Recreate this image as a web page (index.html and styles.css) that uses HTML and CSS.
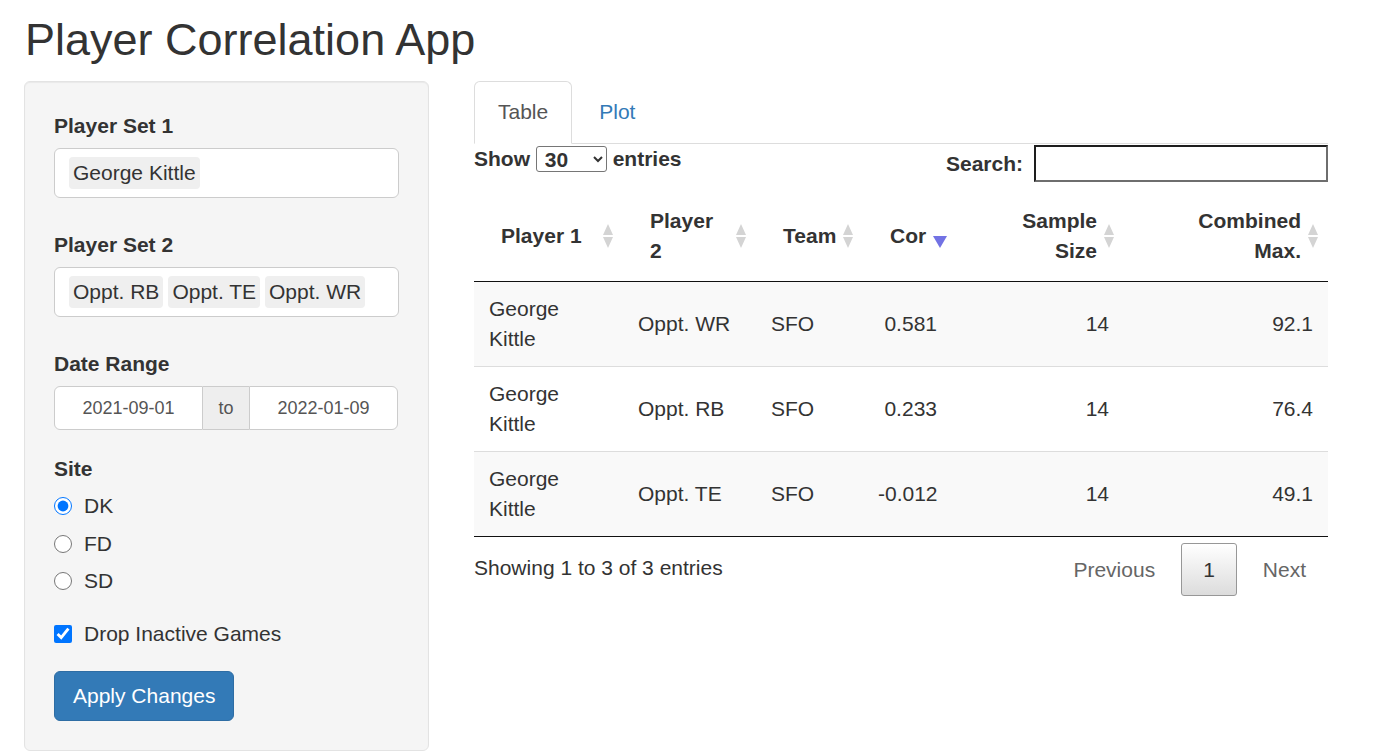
FILE: index.html
```html
<!DOCTYPE html>
<html lang="en">
<head>
<meta charset="utf-8">
<title>Player Correlation App</title>
<link rel="stylesheet" href="styles.css">
</head>
<body>
<div class="page">
  <h2 class="title">Player Correlation App</h2>
  <div class="layout">
    <aside class="well">
      <div class="group g-select">
        <label class="lbl">Player Set 1</label>
        <div class="selectize"><span class="item">George Kittle</span></div>
      </div>
      <div class="group g-select">
        <label class="lbl">Player Set 2</label>
        <div class="selectize"><span class="item">Oppt. RB</span><span class="item">Oppt. TE</span><span class="item">Oppt. WR</span></div>
      </div>
      <div class="group g-date">
        <label class="lbl">Date Range</label>
        <div class="daterange">
          <input class="date-in first" type="text" value="2021-09-01" readonly>
          <span class="addon">to</span>
          <input class="date-in last" type="text" value="2022-01-09" readonly>
        </div>
      </div>
      <div class="group">
        <label class="lbl">Site</label>
        <div class="radios">
          <label class="opt"><input type="radio" name="site" checked>DK</label>
          <label class="opt"><input type="radio" name="site">FD</label>
          <label class="opt"><input type="radio" name="site">SD</label>
        </div>
      </div>
      <label class="opt check"><input type="checkbox" checked>Drop Inactive Games</label>
      <button class="btn" type="button">Apply Changes</button>
    </aside>
    <main class="main">
      <ul class="tabs">
        <li class="tab active">Table</li>
        <li class="tab">Plot</li>
      </ul>
      <div class="dt">
        <div class="dt-top">
          <div class="length">Show <select><option>30</option></select> entries</div>
          <div class="filter"><span>Search:</span><input class="search" type="search"></div>
        </div>
        <table class="grid">
          <colgroup>
            <col class="c1"><col class="c2"><col class="c3"><col class="c4"><col class="c5"><col class="c6">
          </colgroup>
          <thead>
            <tr>
              <th class="sorting">Player 1</th>
              <th class="sorting">Player<br>2</th>
              <th class="sorting">Team</th>
              <th class="num sorting-desc">Cor</th>
              <th class="num sorting">Sample<br>Size</th>
              <th class="num sorting">Combined<br>Max.</th>
            </tr>
          </thead>
          <tbody>
            <tr class="odd">
              <td>George<br>Kittle</td><td>Oppt. WR</td><td>SFO</td><td class="num">0.581</td><td class="num">14</td><td class="num">92.1</td>
            </tr>
            <tr>
              <td>George<br>Kittle</td><td>Oppt. RB</td><td>SFO</td><td class="num">0.233</td><td class="num">14</td><td class="num">76.4</td>
            </tr>
            <tr class="odd">
              <td>George<br>Kittle</td><td>Oppt. TE</td><td>SFO</td><td class="num">-0.012</td><td class="num">14</td><td class="num">49.1</td>
            </tr>
          </tbody>
        </table>
        <div class="dt-bottom">
          <div class="info">Showing 1 to 3 of 3 entries</div>
          <div class="paginate">
            <span class="pbtn">Previous</span>
            <span class="pbtn current">1</span>
            <span class="pbtn">Next</span>
          </div>
        </div>
      </div>
    </main>
  </div>
</div>
</body>
</html>
```
FILE: styles.css
```css
* { box-sizing: border-box; }

body {
  margin: 0;
  font-family: "Liberation Sans", Arial, sans-serif;
  font-size: 21px;
  line-height: 30px;
  color: #333;
  background: #fff;
}

.page { padding-left: 24px; }

.title {
  font-size: 45px;
  font-weight: normal;
  line-height: 50px;
  margin: 15px 0 16px 1px;
  color: #333;
}

.layout {
  display: flex;
  align-items: flex-start;
  gap: 45px;
}

/* ---------- sidebar ---------- */
.well {
  flex: none;
  width: 405px;
  background: #f5f5f5;
  border: 1px solid #e3e3e3;
  border-radius: 6px;
  padding: 29px;
  box-shadow: inset 0 1px 1px rgba(0, 0, 0, .05);
}

.lbl {
  display: block;
  font-weight: bold;
  margin-bottom: 7px;
}

.g-select { margin-bottom: 32px; }
.g-date { margin-bottom: 24px; }

.selectize {
  height: 50px;
  border: 1px solid #ccc;
  border-radius: 6px;
  background: #fff;
  padding: 8px 14px;
  display: flex;
  gap: 5px;
}

.item {
  background: #efefef;
  border-radius: 4px;
  padding: 1px 4px;
  line-height: 30px;
  color: #333;
}

.daterange {
  display: flex;
  height: 44px;
}

.date-in {
  width: 149px;
  height: 44px;
  border: 1px solid #ccc;
  background: #fff;
  font-family: "Liberation Sans", Arial, sans-serif;
  font-size: 18px;
  color: #555;
  text-align: center;
  padding: 0;
  margin: 0;
}

.date-in.first { border-radius: 6px 0 0 6px; }
.date-in.last { border-radius: 0 6px 6px 0; }

.addon {
  width: 46px;
  background: #eee;
  border-top: 1px solid #ccc;
  border-bottom: 1px solid #ccc;
  font-size: 18px;
  color: #555;
  display: flex;
  align-items: center;
  justify-content: center;
}

.radios {
  display: flex;
  flex-direction: column;
  gap: 7.5px;
}

.opt {
  display: flex;
  align-items: center;
  height: 30px;
  font-weight: normal;
}

.opt input {
  width: 18px;
  height: 18px;
  margin: 0 12px 0 0;
}

.check { margin-top: 23px; }

.btn {
  display: block;
  margin-top: 22px;
  font-family: "Liberation Sans", Arial, sans-serif;
  font-size: 21px;
  line-height: 30px;
  padding: 9px 18px;
  color: #fff;
  background: #337ab7;
  border: 1px solid #2e6da4;
  border-radius: 6px;
}

/* ---------- main ---------- */
.main {
  flex: none;
  width: 854px;
}

.tabs {
  display: flex;
  list-style: none;
  margin: 0;
  padding: 0;
  border-bottom: 1px solid #ddd;
}

.tab {
  padding: 15px 23px 16px;
  border: 1px solid transparent;
  border-radius: 6px 6px 0 0;
  margin-bottom: -1px;
  margin-right: 3px;
  color: #337ab7;
  line-height: 30px;
}

.tab.active {
  border-color: #ddd #ddd transparent;
  background: #fff;
  color: #555;
}

.dt-top {
  display: flex;
  justify-content: space-between;
  align-items: flex-start;
}

.length {
  font-weight: bold;
  line-height: 30px;
}

.length select {
  width: 71px;
  height: 26px;
  font-family: "Liberation Sans", Arial, sans-serif;
  font-size: 21px;
  font-weight: bold;
  color: #333;
  border: 1px solid #767676;
  border-radius: 3px;
  background: #fff;
  padding: 0 0 0 4px;
  vertical-align: middle;
  margin: -3px 0 0;
}

.filter {
  display: flex;
  align-items: center;
  margin-top: 1px;
  font-weight: bold;
}

.search {
  width: 294px;
  height: 37px;
  margin: 0 0 0 11px;
  border-style: solid;
  border-width: 2px;
  border-color: #1e1e1e #6e6e6e #6e6e6e #1e1e1e;
  background: #fff;
  padding: 0 4px;
  font-size: 21px;
}

.grid {
  width: 854px;
  table-layout: fixed;
  border-collapse: separate;
  border-spacing: 0;
  margin-top: 9px;
  border-bottom: 1px solid #111;
}

.c1 { width: 149px; }
.c2 { width: 133px; }
.c3 { width: 107px; }
.c4 { width: 89px; }
.c5 { width: 172px; }
.c6 { width: 204px; }

.grid th {
  position: relative;
  padding: 15px 27px;
  font-weight: bold;
  text-align: left;
  vertical-align: middle;
  border-bottom: 1px solid #111;
}

.grid th.num,
.grid td.num { text-align: right; }

.grid td {
  padding: 12px 15px;
  vertical-align: middle;
  color: #333;
}

.grid tbody tr + tr td { border-top: 1px solid #ddd; }
.grid tr.odd td { background: #f9f9f9; }

/* sort icons */
.sorting::before,
.sorting::after {
  content: "";
  position: absolute;
  right: 10px;
  width: 0;
  height: 0;
  border-left: 5px solid transparent;
  border-right: 5px solid transparent;
}

.sorting::before {
  top: 50%;
  margin-top: -12px;
  border-bottom: 11px solid #d4d4d4;
}

.sorting::after {
  top: 50%;
  margin-top: 1px;
  border-top: 11px solid #d4d4d4;
}

.sorting-desc::after {
  content: "";
  position: absolute;
  right: 5px;
  top: 50%;
  margin-top: 0;
  width: 0;
  height: 0;
  border-left: 7px solid transparent;
  border-right: 7px solid transparent;
  border-top: 12px solid #7272e4;
}

.dt-bottom {
  display: flex;
  justify-content: space-between;
  align-items: flex-start;
}

.info { padding-top: 16px; }

.paginate {
  padding-top: 6px;
  display: flex;
  gap: 4px;
}

.pbtn {
  padding: 10.5px 21px;
  border: 1px solid transparent;
  border-radius: 3px;
  color: #666;
  line-height: 30px;
}

.pbtn.current {
  border-color: #979797;
  background: linear-gradient(to bottom, #fff 0%, #dcdcdc 100%);
  color: #333;
}
```
